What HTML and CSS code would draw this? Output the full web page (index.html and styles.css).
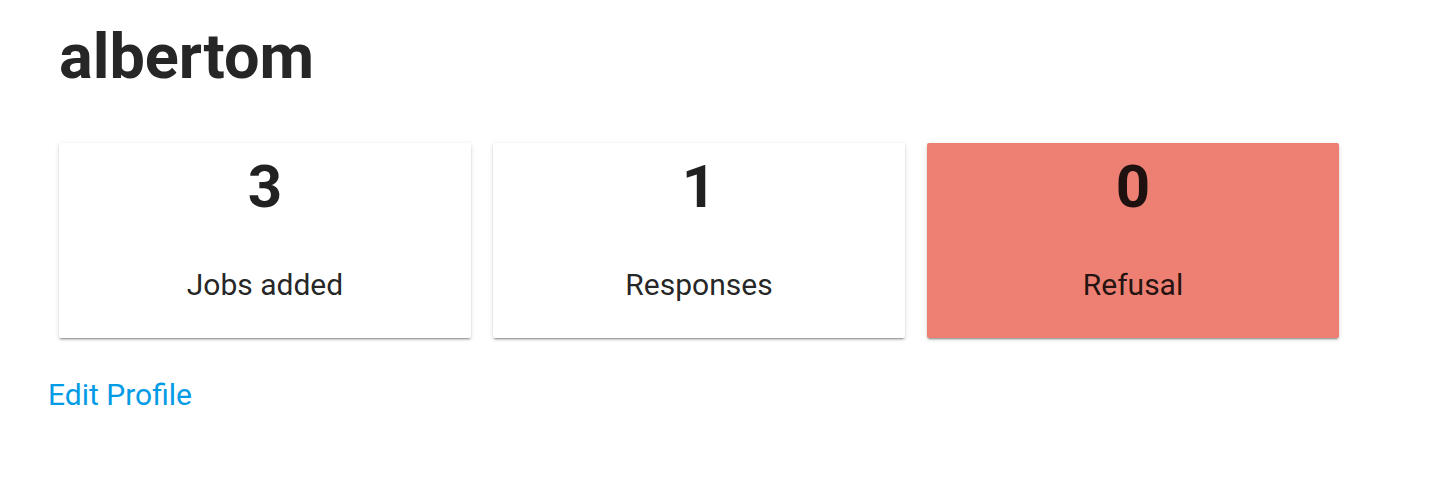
FILE: index.html
```html
<!DOCTYPE html>
<html lang="en">
<head>
<meta charset="utf-8">
<title>albertom</title>
<link rel="stylesheet" href="styles.css">
</head>
<body>
<main class="page">
  <h1 class="title">albertom</h1>
  <section class="stats">
    <div class="card">
      <div class="card-number">3</div>
      <div class="card-label">Jobs added</div>
    </div>
    <div class="card">
      <div class="card-number">1</div>
      <div class="card-label">Responses</div>
    </div>
    <div class="card card-danger">
      <div class="card-number">0</div>
      <div class="card-label">Refusal</div>
    </div>
  </section>
  <a class="edit-link" href="#">Edit Profile</a>
</main>
</body>
</html>
```
FILE: styles.css
```css
html, body {
  margin: 0;
  padding: 0;
  background: #ffffff;
}

body {
  font-family: Roboto, "Liberation Sans", Arial, sans-serif;
  color: rgba(0, 0, 0, 0.87);
}

.page {
  display: flex;
  flex-direction: column;
  align-items: flex-start;
  padding-left: 48px;
  padding-top: 21px;
}

.title {
  margin: 0 0 0 11px;
  font-size: 63px;
  line-height: 72px;
  font-weight: 700;
  color: #262626;
}

.stats {
  display: flex;
  gap: 22px;
  margin-top: 50px;
  margin-left: 11px;
}

.card {
  width: 412px;
  height: 195px;
  box-sizing: border-box;
  padding-top: 8px;
  display: flex;
  flex-direction: column;
  align-items: center;
  background: #ffffff;
  border-radius: 2px;
  box-shadow: 0 3px 1px -2px rgba(0, 0, 0, 0.2),
              0 2px 2px 0 rgba(0, 0, 0, 0.14),
              0 1px 5px 0 rgba(0, 0, 0, 0.12);
}

.card-danger {
  background: #ed8073;
}

.card-number {
  font-size: 60px;
  line-height: 72px;
  font-weight: 700;
  color: rgba(0, 0, 0, 0.87);
}

.card-label {
  margin-top: 44px;
  font-size: 30px;
  line-height: 36px;
  font-weight: 400;
  color: rgba(0, 0, 0, 0.87);
}

.edit-link {
  margin-top: 39px;
  font-size: 30px;
  line-height: 36px;
  color: #039be5;
  text-decoration: none;
}
```
